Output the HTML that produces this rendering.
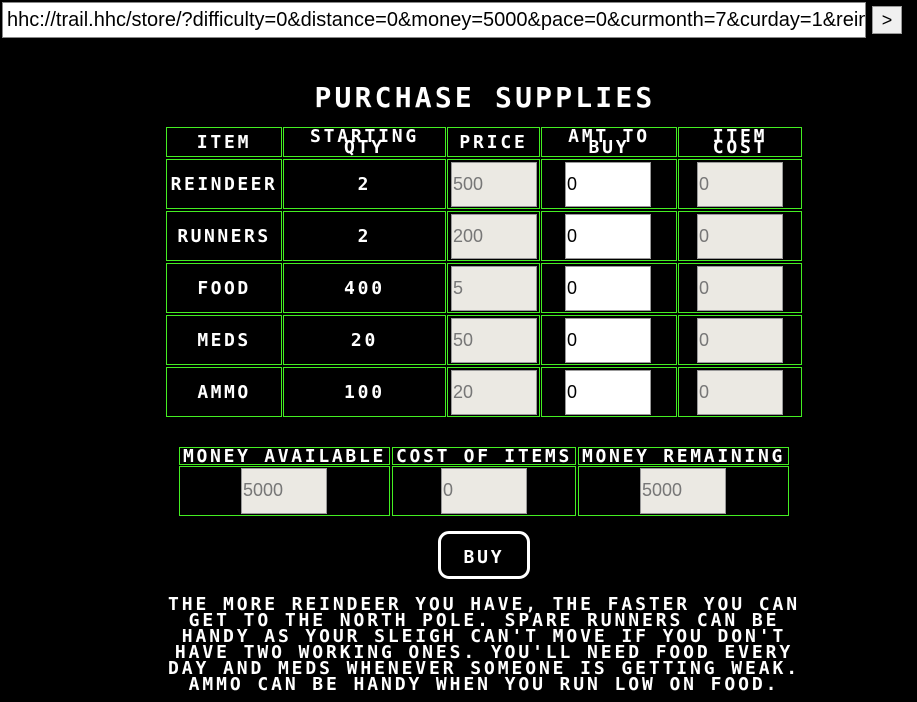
<!DOCTYPE html>
<html><head><style>
*{margin:0;padding:0;box-sizing:border-box}
body{width:917px;height:702px;background:#000;position:relative;overflow:hidden;font-family:"DejaVu Sans Mono",monospace;color:#fff}
.a{position:absolute}
.url{left:2px;top:2px;width:864px;height:36px;background:#fff;border:1px solid #888;font:20px "Liberation Sans",sans-serif;color:#000;padding:6px 0 0 4px;white-space:nowrap;overflow:hidden}
.go{left:872px;top:6px;width:30px;height:28px;background:#f0f0f0;border:1px solid #999;font:18px "Liberation Sans",sans-serif;color:#000;text-align:center;line-height:26px}
.c{border:1px solid #4e2;display:flex;align-items:center;justify-content:center;text-align:center}
.t{font-weight:bold;font-size:18px;letter-spacing:2.8px;line-height:11px;text-transform:uppercase}
.in{border:1px solid #999;font:18px "Liberation Sans",sans-serif;color:#777;background:#ebe9e3;padding:12px 0 0 1px;line-height:18px}
.w{background:#fff;color:#000}
</style></head><body>
<div class="a url">hhc://trail.hhc/store/?difficulty=0&amp;distance=0&amp;money=5000&amp;pace=0&amp;curmonth=7&amp;curday=1&amp;reindeer=2&amp;runners=2</div>
<div class="a go">&gt;</div>
<div class="a t" style="left:300px;top:88px;width:370px;text-align:center;font-size:28px;letter-spacing:3.2px;line-height:20px">PURCHASE SUPPLIES</div>

<div class="a c t" style="left:166px;top:127px;width:116px;height:30px">ITEM</div>
<div class="a c t" style="left:283px;top:127px;width:163px;height:30px">STARTING<br>QTY</div>
<div class="a c t" style="left:447px;top:127px;width:93px;height:30px">PRICE</div>
<div class="a c t" style="left:541px;top:127px;width:136px;height:30px">AMT TO<br>BUY</div>
<div class="a c t" style="left:678px;top:127px;width:124px;height:30px">ITEM<br>COST</div>

<div id="rows"></div>
<script>
var d=[["REINDEER",2,500],["RUNNERS",2,200],["FOOD",400,5],["MEDS",20,50],["AMMO",100,20]],h="";
d.forEach(function(r,i){var y=159+52*i;
h+='<div class="a c t" style="left:166px;top:'+y+'px;width:116px;height:50px;letter-spacing:2.5px">'+r[0]+'</div>';
h+='<div class="a c t" style="left:283px;top:'+y+'px;width:163px;height:50px">'+r[1]+'</div>';
h+='<div class="a c" style="left:447px;top:'+y+'px;width:93px;height:50px"></div>';
h+='<div class="a c" style="left:541px;top:'+y+'px;width:136px;height:50px"></div>';
h+='<div class="a c" style="left:678px;top:'+y+'px;width:124px;height:50px"></div>';
h+='<div class="a in" style="left:451px;top:'+(y+3)+'px;width:86px;height:45px">'+r[2]+'</div>';
h+='<div class="a in w" style="left:565px;top:'+(y+3)+'px;width:86px;height:45px">0</div>';
h+='<div class="a in" style="left:697px;top:'+(y+3)+'px;width:86px;height:45px">0</div>';});
document.getElementById("rows").innerHTML=h;
</script>

<div class="a c t" style="left:179px;top:447px;width:211px;height:18px;letter-spacing:2.7px">MONEY AVAILABLE</div>
<div class="a c t" style="left:392px;top:447px;width:184px;height:18px;letter-spacing:2.7px">COST OF ITEMS</div>
<div class="a c t" style="left:578px;top:447px;width:211px;height:18px;letter-spacing:2.7px">MONEY REMAINING</div>
<div class="a c" style="left:179px;top:466px;width:211px;height:50px"></div>
<div class="a c" style="left:392px;top:466px;width:184px;height:50px"></div>
<div class="a c" style="left:578px;top:466px;width:211px;height:50px"></div>
<div class="a in" style="left:241px;top:468px;width:86px;height:46px">5000</div>
<div class="a in" style="left:441px;top:468px;width:86px;height:46px">0</div>
<div class="a in" style="left:640px;top:468px;width:86px;height:46px">5000</div>

<div class="a t" style="left:438px;top:531px;width:92px;height:48px;border:3px solid #fff;border-radius:11px;display:flex;align-items:center;justify-content:center;padding-top:4px">BUY</div>

<div class="a t" style="left:140px;top:597px;width:688px;text-align:center;line-height:16px;letter-spacing:2.9px">THE MORE REINDEER YOU HAVE, THE FASTER YOU CAN<br>GET TO THE NORTH POLE. SPARE RUNNERS CAN BE<br>HANDY AS YOUR SLEIGH CAN'T MOVE IF YOU DON'T<br>HAVE TWO WORKING ONES. YOU'LL NEED FOOD EVERY<br>DAY AND MEDS WHENEVER SOMEONE IS GETTING WEAK.<br>AMMO CAN BE HANDY WHEN YOU RUN LOW ON FOOD.</div>
</body></html>
